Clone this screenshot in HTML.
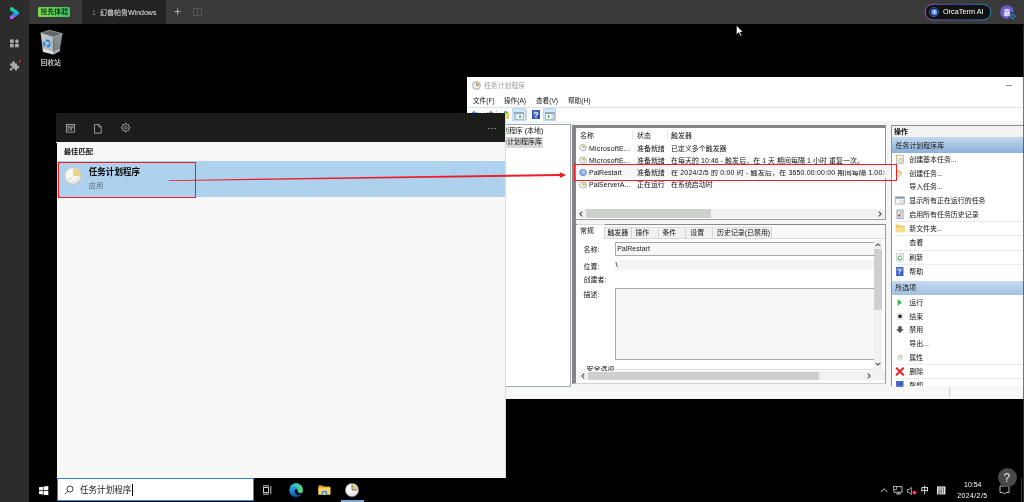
<!DOCTYPE html>
<html lang="zh-CN">
<head>
<meta charset="utf-8">
<title>OrcaTerm</title>
<style>
*{box-sizing:border-box;margin:0;padding:0}
html,body{width:1024px;height:502px;overflow:hidden;background:#000}
body{position:relative;font-family:"Liberation Sans","Noto Sans CJK SC",sans-serif;color:#000}
.a{position:absolute;white-space:nowrap}
.t{position:absolute;white-space:nowrap;line-height:1;font-size:6.95px;color:#111}
svg{position:absolute;overflow:visible}
/* ---------- OrcaTerm chrome ---------- */
#topbar{left:0;top:0;width:1024px;height:24.3px;background:#393939}
#side{left:0;top:0;width:29px;height:502px;background:#2c2c2c}
#tab1{left:82px;top:0;width:84px;height:24.3px;background:#232323}
#badge{left:38.2px;top:7px;width:32.3px;height:9.9px;background:linear-gradient(90deg,#82d948,#3cc56c);border-radius:1.5px;color:#103a12;font-size:6.9px;line-height:9.9px;text-align:center;font-weight:700}
/* ---------- search panel ---------- */
#sp{left:56.4px;top:112.5px;width:449.4px;height:365.8px;background:#f7f7f7;border-right:1px solid #d9dbdc}
#sphead{left:0;top:0;width:449px;height:29.4px;background:#1b1d1a}
#sprow{left:0;top:48.5px;width:449px;height:36px;background:#aed1ee}
/* ---------- task scheduler window ---------- */
#win{left:467px;top:76.8px;width:557px;height:321.9px;background:#f5f5f5}
#wtitle{left:0;top:0;width:557px;height:18px;background:#fff}
#wmenu{left:0;top:18px;width:557px;height:12px;background:#fff}
#wtool{left:0;top:30px;width:557px;height:14.2px;background:#fff;border-top:0.8px solid #e0e0e0}
.panel{background:#fff}
</style>
</head>
<body>
<div id="root" style="position:absolute;left:0;top:0;width:1024px;height:502px;will-change:transform">

<!-- ================= OrcaTerm top bar & sidebar ================= -->
<div class="a" id="topbar"></div>
<div class="a" id="tab1"></div>
<div class="a" id="side"></div>
<div class="a" id="badge">抢先体验</div>
<div class="t" style="left:92px;top:8.5px;color:#8a8a8a;font-size:7px">1</div>
<div class="t" style="left:100px;top:8.5px;color:#e8e8e8;font-size:7px">幻兽帕鲁Windows</div>
<!-- plus & split icons -->
<svg style="left:173.7px;top:8.3px" width="7.2" height="7.2" viewBox="0 0 8 8"><path d="M4 0.5V7.5M0.5 4H7.5" stroke="#c8c8c8" stroke-width="0.9" fill="none"/></svg>
<svg style="left:193px;top:8px" width="9" height="8" viewBox="0 0 9 8"><rect x="0.5" y="0.5" width="8" height="7" fill="none" stroke="#5e5e5e" stroke-width="0.8"/><path d="M4.5 0.5V7.5" stroke="#5e5e5e" stroke-width="0.8"/></svg>
<!-- logo -->
<svg style="left:9px;top:6px" width="11" height="14" viewBox="0 0 11 14">
  <defs><linearGradient id="lg1" x1="0" y1="0" x2="0" y2="1"><stop offset="0" stop-color="#1fd18a"/><stop offset="0.45" stop-color="#17b7d8"/><stop offset="0.75" stop-color="#3b7cf5"/><stop offset="1" stop-color="#c65cf0"/></linearGradient></defs>
  <path d="M2.6 2.9 L8.2 7 L2.6 11.3" fill="none" stroke="url(#lg1)" stroke-width="3.7" stroke-linecap="round" stroke-linejoin="round"/>
</svg>
<!-- sidebar icons -->
<svg style="left:10px;top:38.6px" width="9.2" height="8.8" viewBox="0 0 10 10" preserveAspectRatio="none"><g fill="#ababab"><rect x="0" y="0.5" width="4" height="4"/><rect x="0" y="5.5" width="4" height="4"/><rect x="5.5" y="5.5" width="4" height="4"/><path d="M7.5 0 L10 2.5 L7.5 5 L5 2.5Z"/></g></svg>
<svg style="left:9px;top:59.6px" width="12" height="12" viewBox="0 0 12 12"><path fill="#ababab" d="M1 3.5h2.2a1.5 1.5 0 1 1 2.6 0H8v2.2a1.5 1.5 0 1 1 0 2.6V10.5H5.8a1.4 1.4 0 1 0-2.6 0H1V8.2a1.4 1.4 0 1 0 0-2.5Z"/><circle cx="10.9" cy="1.5" r="1.15" fill="#ff1a1a"/></svg>
<!-- OrcaTerm AI pill -->
<svg style="left:924px;top:3px" width="68" height="18" viewBox="0 0 68 18">
  <defs><linearGradient id="lg2" x1="0" y1="0" x2="1" y2="0"><stop offset="0" stop-color="#c45adf"/><stop offset="0.5" stop-color="#3f62c8"/><stop offset="1" stop-color="#1fa4d4"/></linearGradient>
  <radialGradient id="rg1" cx="0.55" cy="0.45" r="0.6"><stop offset="0" stop-color="#f4b8e6"/><stop offset="0.5" stop-color="#7fa6f5"/><stop offset="1" stop-color="#2e6fe0"/></radialGradient></defs>
  <rect x="1.2" y="1.3" width="65.6" height="15.6" rx="7.8" fill="#121212" stroke="url(#lg2)" stroke-width="0.8"/>
  <circle cx="10" cy="9" r="4.6" fill="#0c1a33" stroke="#2a8fc4" stroke-width="0.6"/>
  <circle cx="10.2" cy="9.2" r="3.2" fill="url(#rg1)"/>
</svg>
<div class="t" style="left:943px;top:8.2px;color:#fff;font-size:7.3px">OrcaTerm AI</div>
<!-- avatar -->
<svg style="left:999px;top:4px" width="22" height="18" viewBox="0 0 22 18">
  <circle cx="8" cy="8" r="6.8" fill="#6a5ad0"/>
  <circle cx="13.7" cy="12.3" r="4.1" fill="#2f3a4f"/>
  <path d="M13.7 9.9 L16.1 12.3 L13.7 14.7 L11.3 12.3Z" fill="none" stroke="#27b6e8" stroke-width="1"/>
</svg>
<div class="t" style="left:1003.5px;top:8.5px;color:#fff;font-size:7px;font-weight:700">嘉</div>
<!-- cursor -->
<svg style="left:736px;top:25px" width="8" height="12" viewBox="0 0 8 12"><path d="M0.5 0.5V9.5L2.8 7.4L4.4 11L5.6 10.5L4.1 7H7Z" fill="#fff" stroke="#000" stroke-width="0.4"/></svg>

<!-- ================= remote desktop ================= -->
<!-- recycle bin -->
<svg style="left:30.6px;top:24px" width="40" height="36" viewBox="0 0 40 36">
  <defs>
   <linearGradient id="rbl" x1="0" y1="0" x2="1" y2="1"><stop offset="0" stop-color="#c9cdd0"/><stop offset="1" stop-color="#a9aeb2"/></linearGradient>
   <linearGradient id="rbr" x1="0" y1="0" x2="0" y2="1"><stop offset="0" stop-color="#8d9296"/><stop offset="1" stop-color="#7a7f83"/></linearGradient>
  </defs>
  <path d="M9.6 9.1 L22.5 12.9 L22.5 30.6 L12 27.7Z" fill="url(#rbl)"/>
  <path d="M22.5 12.9 L31.5 9.6 L28.7 27.2 L22.5 30.6Z" fill="url(#rbr)"/>
  <path d="M9.6 9.1 L18.2 6.2 L31.5 9.6 L22.5 12.9Z" fill="#63676b"/>
  <path d="M9.6 9.1 L18.2 6.2 L31.5 9.6 L22.5 12.9Z" fill="none" stroke="#d5d8da" stroke-width="0.5"/>
  <path d="M11.6 24.6 L22.5 27.4 L22.5 30.6 L12 27.7Z" fill="#e3e6e8" opacity="0.85"/>
  <path d="M22.5 27.4 L29.2 24.2 L28.7 27.2 L22.5 30.6Z" fill="#b4b9bd" opacity="0.8"/>
  <circle cx="15.9" cy="19.4" r="2.9" fill="none" stroke="#1787e8" stroke-width="2" stroke-dasharray="4.4 1.7"/>
</svg>
<div class="t" style="left:40.5px;top:60px;color:#fff;font-size:6.8px">回收站</div>

<!-- ================= Task Scheduler window ================= -->
<div class="a" id="win">
  <div class="a" id="wtitle"></div>
  <div class="a" id="wmenu"></div>
  <div class="a" id="wtool"></div>
  <!-- title -->
  <svg style="left:4.6px;top:3.9px" width="9" height="9" viewBox="0 0 8 8"><circle cx="4" cy="4" r="3.45" fill="#f1f5fa" stroke="#a3a3a3" stroke-width="0.85"/><path d="M4 4V0.9A3.1 3.1 0 0 1 7.1 4Z" fill="#ecc850"/><path d="M4 1.6V4H6" stroke="#555" stroke-width="0.55" fill="none"/></svg>
  <div class="t" style="left:17px;top:6.7px;color:#9a9a9a;font-size:6.85px">任务计划程序</div>
  <div class="a" style="left:539.2px;top:8.1px;width:6.2px;height:0.8px;background:#8a8a8a"></div>
  <!-- menu -->
  <div class="t" style="left:6px;top:21.7px;font-size:6.6px">文件(F)</div>
  <div class="t" style="left:37px;top:21.7px;font-size:6.6px">操作(A)</div>
  <div class="t" style="left:69px;top:21.7px;font-size:6.6px">查看(V)</div>
  <div class="t" style="left:101px;top:21.7px;font-size:6.6px">帮助(H)</div>
  <!-- toolbar -->
  <svg style="left:3px;top:32.6px" width="28" height="10" viewBox="0 0 28 10"><path d="M0.8 5L4.6 1.2V3.6H8.4V6.4H4.6V8.8Z" fill="#2a7de0"/><path d="M24.2 5L20.4 1.2V3.6H16.6V6.4H20.4V8.8Z" fill="#6f7a86"/></svg>
  <div class="a" style="left:28.8px;top:33.5px;width:0.8px;height:9.5px;background:#d6d6d6"></div>
  <div class="a" style="left:37.6px;top:35.4px;width:4.8px;height:7.2px;background:#f3d77c;border:0.5px solid #e3bf5e;border-radius:0.6px"></div>
  <div class="a" style="left:36.6px;top:34.2px;width:3.2px;height:3.2px;background:#3cb83a;border-radius:40%;transform:rotate(45deg)"></div>
  <div class="a" style="left:45px;top:31.7px;width:13.8px;height:12.3px;background:#cce8fc;border:0.5px solid #b6defa"></div>
  <svg style="left:47.2px;top:35.2px" width="9.8" height="7.6" viewBox="0 0 9.8 7.6"><rect x="0.35" y="0.35" width="9.1" height="6.9" fill="#fdfdfd" stroke="#8d97a3" stroke-width="0.7"/><rect x="0.7" y="0.7" width="8.4" height="1.3" fill="#8fa0b6"/><rect x="0.9" y="2.2" width="2.4" height="4.7" fill="#c3d6ee"/><rect x="5" y="3.2" width="2.1" height="2.6" rx="0.6" fill="#33c233"/></svg>
  <div class="a" style="left:59.2px;top:33.5px;width:0.8px;height:9.5px;background:#cfcfcf"></div>
  <div class="a" style="left:65px;top:33.1px;width:8px;height:9.4px;background:linear-gradient(135deg,#6a8ce6,#2c4fb8 70%);border:0.4px solid #3a58a8;color:#fff;font-size:8.6px;line-height:9px;text-align:center;font-weight:700">?</div>
  <div class="a" style="left:76px;top:31.7px;width:13.2px;height:12.3px;background:#cfe8fa;border:0.5px solid #b4dcf6"></div>
  <svg style="left:78.1px;top:35.2px" width="9.8" height="7.6" viewBox="0 0 9.8 7.6"><rect x="0.35" y="0.35" width="9.1" height="6.9" fill="#fdfdfd" stroke="#8d97a3" stroke-width="0.7"/><rect x="0.7" y="0.7" width="8.4" height="1.3" fill="#8fa0b6"/><rect x="6.5" y="2.2" width="2.4" height="4.7" fill="#c3d6ee"/><rect x="2.6" y="3.2" width="2.1" height="2.6" rx="0.6" fill="#33c233"/></svg>

  <!-- left tree -->
  <div class="a panel" style="left:0;top:47.4px;width:104.3px;height:262.8px;border:0.9px solid #a4acb5"></div>
  <div class="a" style="left:25px;top:60.5px;width:51px;height:10.5px;background:#d9d9d9"></div>
  <div class="t" style="left:14.15px;top:51px">任务计划程序 (本地)</div>
  <div class="t" style="left:26.3px;top:62.5px">任务计划程序库</div>

  <!-- center top -->
  <div class="a" style="left:105.2px;top:48.1px;width:313.5px;height:95px;background:#fff;border:3.9px solid #858585;border-left:4.3px solid #858585;border-right:0.8px solid #9a9a9a;border-bottom:1px solid #9a9a9a"></div>
  <div class="a" style="left:165.4px;top:53px;width:0.8px;height:10px;background:#e9e9e9"></div>
  <div class="a" style="left:199.5px;top:53px;width:0.8px;height:10px;background:#e9e9e9"></div>
  <div class="t" style="left:113px;top:56.7px">名称</div>
  <div class="t" style="left:170px;top:56.7px">状态</div>
  <div class="t" style="left:204px;top:56.7px">触发器</div>
  <!-- rows -->
  <div class="t" style="left:122px;top:68.3px;font-size:7px;letter-spacing:0.18px">MicrosoftE...</div>
  <div class="t" style="left:170px;top:68.8px">准备就绪</div>
  <div class="t" style="left:204px;top:68.8px">已定义多个触发器</div>
  <div class="t" style="left:122px;top:80.3px;font-size:7px;letter-spacing:0.18px">MicrosoftE...</div>
  <div class="t" style="left:170px;top:80.8px">准备就绪</div>
  <div class="t" style="left:204px;top:80.8px;letter-spacing:0.07px">在每天的 10:46 - 触发后，在 1 天 期间每隔 1 小时 重复一次。</div>
  <div class="a" style="left:110px;top:88.5px;width:309px;height:13px;background:#f7f7f7"></div>
  <div class="t" style="left:122px;top:92.3px;font-size:7px">PalRestart</div>
  <div class="t" style="left:170px;top:92.8px">准备就绪</div>
  <div class="t" style="left:204px;top:92.8px;width:214px;overflow:hidden;letter-spacing:0.2px">在 2024/2/5 的 0:00 时 - 触发后，在 3650.00:00:00 期间每隔 1.00:00:00 重复一次。</div>
  <div class="t" style="left:122px;top:104.3px;font-size:7px">PalServerA...</div>
  <div class="t" style="left:170px;top:104.8px">正在运行</div>
  <div class="t" style="left:204px;top:104.8px">在系统启动时</div>
  <!-- row icons -->
  <svg style="left:112.3px;top:67.1px" width="8.1" height="44.6" viewBox="0 0 7 43" preserveAspectRatio="none">
    <g fill="#f4f4f0" stroke="#8f8f8f" stroke-width="0.6"><circle cx="3.5" cy="3.5" r="3"/><circle cx="3.5" cy="15.5" r="3"/><circle cx="3.5" cy="39.5" r="3"/></g>
    <circle cx="3.5" cy="27.5" r="3" fill="#8fb8e8" stroke="#4a79b8" stroke-width="0.6"/>
    <g fill="#ecd58a"><path d="M3.5 3.5V0.8A2.7 2.7 0 0 1 6.2 3.5Z"/><path d="M3.5 15.5V12.8A2.7 2.7 0 0 1 6.2 15.5Z"/><path d="M3.5 39.5V36.8A2.7 2.7 0 0 1 6.2 39.5Z"/></g><g stroke="#777" stroke-width="0.5" fill="none"><path d="M3.5 1.6V3.5H5"/><path d="M3.5 13.6V15.5H5"/><path d="M3.5 37.6V39.5H5"/></g>
    <path d="M3.5 25.6V27.5H5" stroke="#fff" stroke-width="0.5" fill="none"/>
  </svg>
  <!-- h scroll -->
  <div class="a" style="left:109.6px;top:132.3px;width:308.4px;height:9px;background:#f1f1f1"></div>
  <div class="a" style="left:119px;top:132.6px;width:125px;height:8.4px;background:#cdd0cd"></div>
  <svg style="left:112px;top:133.8px" width="4" height="6" viewBox="0 0 4 6"><path d="M3.2 0.6L0.9 3L3.2 5.4" fill="none" stroke="#505050" stroke-width="1.1"/></svg>
  <svg style="left:410.5px;top:133.8px" width="4" height="6" viewBox="0 0 4 6"><path d="M0.8 0.6L3.1 3L0.8 5.4" fill="none" stroke="#505050" stroke-width="1.1"/></svg>

  <div class="a" style="left:105.2px;top:143px;width:4.3px;height:4px;background:#858585"></div>
  <!-- center bottom -->
  <div class="a" style="left:105.2px;top:146.9px;width:313.5px;height:160.4px;background:#fff;border:1.2px solid #8a8a8a;border-left:4.3px solid #858585;border-right:0.8px solid #9a9a9a;border-bottom:1px solid #cfcfcf"></div>
  <!-- tabs -->
  <div class="a" style="left:109.5px;top:148.1px;width:308.4px;height:13.6px;background:#f8f8f8"></div>
  <div class="a" style="left:137.6px;top:161.2px;width:280.4px;height:0.6px;background:#dcdcdc"></div>
  <div class="a" style="left:137.6px;top:149.8px;width:167.6px;height:12px;background:#f1f1f1;border-top:0.5px solid #dedede;border-bottom:0.6px solid #d9d9d9;border-right:0.6px solid #d6d6d6"></div>
  <div class="a" style="left:164.1px;top:150px;width:0.6px;height:11.5px;background:#d6d6d6"></div>
  <div class="a" style="left:191px;top:150px;width:0.6px;height:11.5px;background:#d6d6d6"></div>
  <div class="a" style="left:218.2px;top:150px;width:0.6px;height:11.5px;background:#d6d6d6"></div>
  <div class="a" style="left:244.5px;top:150px;width:0.6px;height:11.5px;background:#d6d6d6"></div>
  <div class="a" style="left:109.6px;top:147.4px;width:28.3px;height:14.6px;background:#fff;border:0.6px solid #d9d9d9;border-bottom:none;border-left:none"></div>
  <div class="t" style="left:113px;top:151.2px">常规</div>
  <div class="t" style="left:140.4px;top:152.8px">触发器</div>
  <div class="t" style="left:168.4px;top:152.8px">操作</div>
  <div class="t" style="left:195.4px;top:152.8px">条件</div>
  <div class="t" style="left:223.2px;top:152.8px">设置</div>
  <div class="t" style="left:250px;top:152.8px">历史记录(已禁用)</div>
  <!-- form -->
  <div class="t" style="left:116.6px;top:169.9px">名称:</div>
  <div class="a" style="left:148px;top:165.2px;width:262px;height:13.6px;background:#f7f7f7;border:0.6px solid #a8a8a8"></div>
  <div class="t" style="left:150.2px;top:168.6px;font-size:7px;color:#222">PalRestart</div>
  <div class="a" style="left:148px;top:182.8px;width:262px;height:10.2px;background:#f4f4f4"></div>
  <div class="t" style="left:116.6px;top:186.9px">位置:</div>
  <div class="t" style="left:148.6px;top:184.6px;font-size:8px">\</div>
  <div class="t" style="left:116.6px;top:200.4px">创建者:</div>
  <div class="t" style="left:116.6px;top:215.4px">描述:</div>
  <div class="a" style="left:148.4px;top:211.2px;width:262px;height:72px;background:#f6f6f6;border:0.6px solid #a8a8a8"></div>
  <div class="t" style="left:119.6px;top:289.3px;height:4.6px;overflow:hidden">安全选项</div>
  <div class="a" style="left:147.5px;top:291.8px;width:260px;height:0.6px;background:#dcdcdc"></div>
  <div class="a" style="left:113.5px;top:291.8px;width:5px;height:0.6px;background:#dcdcdc"></div>
  <!-- v scroll -->
  <div class="a" style="left:406.9px;top:163px;width:8.6px;height:131.6px;background:#f1f1f1"></div>
  <div class="a" style="left:407.2px;top:172.7px;width:8px;height:60.7px;background:#cdd0cd"></div>
  <svg style="left:408.2px;top:166px" width="6" height="4" viewBox="0 0 6 4"><path d="M0.6 3.2L3 0.9L5.4 3.2" fill="none" stroke="#505050" stroke-width="1.1"/></svg>
  <svg style="left:408.2px;top:285.6px" width="6" height="4" viewBox="0 0 6 4"><path d="M0.6 0.8L3 3.1L5.4 0.8" fill="none" stroke="#505050" stroke-width="1.1"/></svg>
  <!-- h scroll 2 -->
  <div class="a" style="left:109.6px;top:294.6px;width:308.4px;height:8.6px;background:#f1f1f1"></div>
  <div class="a" style="left:120.9px;top:294.9px;width:231.6px;height:8px;background:#cdd0cd"></div>
  <svg style="left:113.6px;top:296px" width="4" height="6" viewBox="0 0 4 6"><path d="M3.2 0.6L0.9 3L3.2 5.4" fill="none" stroke="#505050" stroke-width="1.1"/></svg>
  <svg style="left:400px;top:296px" width="4" height="6" viewBox="0 0 4 6"><path d="M0.8 0.6L3.1 3L0.8 5.4" fill="none" stroke="#505050" stroke-width="1.1"/></svg>

  <!-- right: actions -->
  <div class="a" style="left:423.6px;top:48px;width:134px;height:260.8px;background:#fff;border-left:1px solid #8e9298;border-top:1.2px solid #8e8e8e"></div>
  <div class="a" style="left:424.6px;top:49px;width:133px;height:12px;background:#f3f3f3"></div>
  <div class="t" style="left:427px;top:52px;font-weight:700">操作</div>
  <div class="a" style="left:424.6px;top:60.7px;width:133px;height:15.2px;background:linear-gradient(#c3d8ee,#8db1da)"></div>
  <div class="t" style="left:428.5px;top:66.2px">任务计划程序库</div>
  <div class="t" style="left:442.2px;top:80.1px">创建基本任务...</div>
  <div class="t" style="left:442.2px;top:93.9px">创建任务...</div>
  <div class="t" style="left:442.2px;top:107.5px">导入任务...</div>
  <div class="t" style="left:442.2px;top:121.4px">显示所有正在运行的任务</div>
  <div class="t" style="left:442.2px;top:134.9px">启用所有任务历史记录</div>
  <div class="t" style="left:442.2px;top:149.2px">新文件夹...</div>
  <div class="t" style="left:442.2px;top:163.6px">查看</div>
  <div class="t" style="left:442.2px;top:177.9px">刷新</div>
  <div class="t" style="left:442.2px;top:192.2px">帮助</div>
  <div class="t" style="left:442.2px;top:223.2px">运行</div>
  <div class="t" style="left:442.2px;top:237px">结束</div>
  <div class="t" style="left:442.2px;top:250.6px">禁用</div>
  <div class="t" style="left:442.2px;top:264.4px">导出...</div>
  <div class="t" style="left:442.2px;top:278px">属性</div>
  <div class="t" style="left:442.2px;top:292.2px">删除</div>
  <div class="a" style="left:424.6px;top:203.9px;width:133px;height:14.4px;background:linear-gradient(#c6daef,#a3c1e2)"></div>
  <div class="t" style="left:428.3px;top:208.6px">所选项</div>
  <div class="t" style="left:442.2px;top:305.3px;height:4.2px;overflow:hidden">帮助</div>
  <div class="a" style="left:427px;top:143.9px;width:130px;height:0.6px;background:#ececec"></div>
  <div class="a" style="left:427px;top:158.2px;width:130px;height:0.6px;background:#ececec"></div>
  <div class="a" style="left:427px;top:173.0px;width:130px;height:0.6px;background:#ececec"></div>
  <div class="a" style="left:427px;top:187.3px;width:130px;height:0.6px;background:#ececec"></div>
  <div class="a" style="left:427px;top:287.5px;width:130px;height:0.6px;background:#ececec"></div>
  <div class="a" style="left:427px;top:301.7px;width:130px;height:0.6px;background:#ececec"></div>
  <svg style="left:423.6px;top:48.7px" width="20" height="261" viewBox="890 125 20 261"><rect x="895.6" y="155.2" width="6.6" height="8" fill="#fff" stroke="#8d8d8d" stroke-width="0.6"/><circle cx="899.6" cy="160.0" r="2.3" fill="#f6f1dc" stroke="#a89858" stroke-width="0.5"/><path d="M899.6 158.5v1.5h1.2" stroke="#666" stroke-width="0.4" fill="none"/><circle cx="895.6" cy="155.6" r="1.1" fill="#f3c230"/><circle cx="897.6" cy="173.5" r="2.8" fill="#f6f1dc" stroke="#a89858" stroke-width="0.5"/><path d="M897.6 173.5V170.9A2.6 2.6 0 0 1 900.2 173.5Z" fill="#f0c23a"/><circle cx="896" cy="170.6" r="1.1" fill="#f3c230"/><rect x="894.6" y="196.9" width="8.8" height="7.2" fill="#f4f7fa" stroke="#8a97a3" stroke-width="0.6"/><rect x="894.6" y="196.9" width="8.8" height="1.7" fill="#7e95ab"/><circle cx="901" cy="202.1" r="1.8" fill="#f6f1dc" stroke="#9a9a8a" stroke-width="0.4"/><rect x="896" y="210.1" width="6" height="8.2" fill="#e6eefb" stroke="#5679bd" stroke-width="0.7"/><circle cx="899.6" cy="212.8" r="1.1" fill="#f2b51d"/><circle cx="898.4" cy="215.5" r="1.2" fill="#e23a2e"/><path d="M895 224.9h3l0.9 1h4.5v6h-8.4z" fill="#f3cf6b" stroke="#d9ab3a" stroke-width="0.4"/><path d="M895 227.3h8.4v4.6h-8.4z" fill="#f8de8c"/><rect x="895.8" y="253.3" width="6.6" height="7.8" fill="#fff" stroke="#a9b5ad" stroke-width="0.6"/><path d="M900.9 257.8a2 2 0 1 1-1.2-1.6" fill="none" stroke="#35a94c" stroke-width="1"/><path d="M899.5 256.5l1.8 0.2l-0.4-1.8z" fill="#35a94c"/><rect x="895.5" y="267.2" width="6.6" height="8.6" fill="#3a63cf" stroke="#21439c" stroke-width="0.5"/><rect x="895.8" y="267.5" width="6" height="3" fill="#6f93e6" opacity="0.6"/><path d="M896.6 299.3v6.4l4.6-3.2z" fill="#3db64c"/><rect x="896" y="313.3" width="6" height="6" fill="#f1f1f1" stroke="#d0d0d0" stroke-width="0.4"/><rect x="897.4" y="314.7" width="3.2" height="3.2" fill="#222"/><path d="M897.2 326.3h3.4v3h2.2l-3.9 3.8l-3.9-3.8h2.2z" fill="#505050"/><circle cx="899" cy="357.5" r="2.7" fill="#f6f6f0" stroke="#a8a8a8" stroke-width="0.5"/><path d="M899 357.5V355.0A2.5 2.5 0 0 1 901.5 357.5Z" fill="#ecd58a"/><path d="M899 355.7v1.8h1.3" stroke="#5577aa" stroke-width="0.4" fill="none"/><path d="M895.6 368.3l6.6 6.4M902.2 368.3l-6.6 6.4" stroke="#e3242b" stroke-width="2" stroke-linecap="round"/><rect x="895.5" y="381.4" width="6.6" height="5" fill="#3a63cf" stroke="#21439c" stroke-width="0.5"/></svg>
  <div class="t" style="left:430.2px;top:191.6px;color:#fff;font-size:7.4px;font-weight:700">?</div>

  <!-- status bar -->
  <div class="a" style="left:0;top:310.1px;width:557px;height:11.8px;background:#f7f7f7"></div>
  <div class="a" style="left:481.6px;top:310px;width:0.7px;height:10px;background:#d4d4d4"></div>
</div>

<!-- ================= Windows search panel ================= -->
<div class="a" id="sp">
  <div class="a" id="sphead"></div>
  <svg style="left:9.6px;top:11.4px" width="9.2" height="8.6" viewBox="0 0 10 9" preserveAspectRatio="none"><rect x="0.5" y="0.5" width="9" height="8" fill="none" stroke="#c6c6c6" stroke-width="0.75"/><path d="M0.5 2.3H9.5M2.2 3.6V7.2M2.2 3.8H4.6V7M6.2 3.8V7M5.2 3.8H8" stroke="#c6c6c6" stroke-width="0.7" fill="none"/></svg>
  <svg style="left:37.3px;top:11.2px" width="7.8" height="9.6" viewBox="0 0 8 10"><path d="M0.5 0.5H5L7.5 3V9.5H0.5Z M5 0.5V3H7.5" fill="none" stroke="#c6c6c6" stroke-width="0.75"/></svg>
  <svg style="left:64.7px;top:10.9px" width="9.4" height="9.4" viewBox="0 0 10 10"><path d="M8.31 4.21 L9.46 4.44 L9.46 5.56 L8.31 5.79 L7.90 6.78 L8.56 7.76 L7.76 8.56 L6.78 7.90 L5.79 8.31 L5.56 9.46 L4.44 9.46 L4.21 8.31 L3.22 7.90 L2.24 8.56 L1.44 7.76 L2.10 6.78 L1.69 5.79 L0.54 5.56 L0.54 4.44 L1.69 4.21 L2.10 3.22 L1.44 2.24 L2.24 1.44 L3.22 2.10 L4.21 1.69 L4.44 0.54 L5.56 0.54 L5.79 1.69 L6.78 2.10 L7.76 1.44 L8.56 2.24 L7.90 3.22Z" fill="none" stroke="#c6c6c6" stroke-width="0.75" stroke-linejoin="round"/><circle cx="5" cy="5" r="1.35" fill="none" stroke="#c6c6c6" stroke-width="0.7"/></svg>
  <div class="t" style="left:431px;top:11.9px;color:#d8d8d8;font-size:9px;letter-spacing:0.2px">···</div>
  <div class="t" style="left:7.3px;top:35.5px;font-weight:700;font-size:7.4px;color:#111">最佳匹配</div>
  <div class="a" id="sprow"></div>
  <div class="a" style="left:0;top:30px;width:0.6px;height:336.3px;background:#000"></div>
  <!-- app icon -->
  <svg style="left:7.5px;top:54.9px" width="18.1" height="18.1" viewBox="0 0 18 18">
    <defs><radialGradient id="ck" cx="0.4" cy="0.35" r="0.75"><stop offset="0" stop-color="#ffffff"/><stop offset="0.7" stop-color="#ecece6"/><stop offset="1" stop-color="#c9c9c2"/></radialGradient></defs>
    <circle cx="9" cy="9" r="8.4" fill="url(#ck)" stroke="#b9b9b2" stroke-width="0.6"/>
    <path d="M9 9V1.2A7.8 7.8 0 0 1 16.8 9Z" fill="#ecd58a"/>
    <path d="M9 9 L3.5 14" stroke="#d0d0cc" stroke-width="0.8"/>
  </svg>
  <div class="t" style="left:32.4px;top:55.7px;font-weight:700;font-size:8.55px;color:#000">任务计划程序</div>
  <div class="t" style="left:32.4px;top:69.5px;font-size:7.3px;color:#5a6a78">应用</div>
</div>

<!-- ================= red annotations ================= -->
<div class="a" style="left:58.4px;top:162px;width:137.6px;height:35.6px;border:1.4px solid #ee1c25"></div>
<div class="a" style="left:574px;top:163.7px;width:323.2px;height:16.9px;border:1.6px solid #ee1c25"></div>
<svg style="left:0;top:0" width="1024" height="502" viewBox="0 0 1024 502"><path d="M168.8 180.2 L560.5 174.0 L560.5 176.1 L168.8 181.0Z" fill="#ee1c25"/><path d="M559.8 172.2 L566.2 175 L559.8 177.9Z" fill="#ee1c25"/></svg>

<!-- ================= Windows taskbar ================= -->
<div class="a" style="left:29px;top:478.2px;width:995px;height:23.8px;background:#000"></div>
<svg style="left:38.6px;top:485.5px" width="9.3" height="9.3" viewBox="0 0 9 9"><g fill="#fff"><path d="M0 1.2L3.8 0.7V4.2H0Z"/><path d="M4.4 0.6L9 0V4.2H4.4Z"/><path d="M0 4.8H3.8V8.3L0 7.8Z"/><path d="M4.4 4.8H9V9L4.4 8.4Z"/></g></svg>
<div class="a" style="left:56.7px;top:478.3px;width:196.9px;height:22.8px;background:#fff;border:1.4px solid #2b85d8"></div>
<svg style="left:63.6px;top:485px" width="10" height="10" viewBox="0 0 10 10"><circle cx="6" cy="4" r="3" fill="none" stroke="#333" stroke-width="0.9"/><path d="M3.8 6.2L0.8 9.2" stroke="#333" stroke-width="0.9"/></svg>
<div class="t" style="left:80px;top:485.6px;font-size:8.55px;color:#111">任务计划程序</div>
<div class="a" style="left:131.8px;top:484.2px;width:0.8px;height:11.4px;background:#000"></div>
<!-- task view -->
<svg style="left:262px;top:485px" width="10" height="10" viewBox="0 0 10 10"><rect x="1.5" y="2.5" width="5" height="5" fill="none" stroke="#e0e0e0" stroke-width="0.9"/><path d="M1 0.8H7M1 9.2H7M8.8 1V9" stroke="#e0e0e0" stroke-width="0.9"/></svg>
<!-- edge -->
<svg style="left:289.1px;top:482.7px" width="14.3" height="14.3" viewBox="0 0 14 14">
  <defs><linearGradient id="eg" x1="0.2" y1="0" x2="0.6" y2="1"><stop offset="0" stop-color="#35b8f0"/><stop offset="0.55" stop-color="#1a7fd4"/><stop offset="1" stop-color="#0b4f9e"/></linearGradient>
  <linearGradient id="eg2" x1="0" y1="0" x2="1" y2="1"><stop offset="0" stop-color="#2fc0c8"/><stop offset="1" stop-color="#63d968"/></linearGradient></defs>
  <circle cx="7" cy="7" r="6.7" fill="url(#eg)"/>
  <path d="M5.5 0.5A6.7 6.7 0 0 1 13.7 7C13.7 9 12.2 9.8 10.8 9.8 9.2 9.8 8.4 9 8.6 8.2 9.4 6.4 8.2 4.2 5.8 3.6 4 3.2 2.4 3.8 1.4 4.6 2.2 2.6 3.6 1 5.5 0.5Z" fill="url(#eg2)"/>
  <path d="M6.3 6.2C7.6 6 8.7 6.9 8.6 8.2 8.4 9 9.2 9.8 10.8 9.8 11.6 9.8 12.3 9.6 12.8 9.2 12 11.4 9.6 12.4 7.8 11.6 5.6 10.6 5 8 6.3 6.2Z" fill="#04101c"/>
</svg>
<!-- explorer -->
<svg style="left:318px;top:484.2px" width="12.8" height="11.2" viewBox="0 0 14 12">
  <path d="M0.5 1.5h4.5l1 1.2h7.5v8.8h-13z" fill="#e9a825"/>
  <path d="M0.5 4h13v7.5h-13z" fill="#fbd35f"/>
  <rect x="4" y="7.5" width="6" height="4" fill="#3b8edb"/><rect x="5.5" y="9" width="3" height="2.5" fill="#fbd35f"/>
</svg>
<!-- task scheduler -->
<svg style="left:345.3px;top:483.1px" width="14" height="14" viewBox="0 0 14 14">
  <defs><radialGradient id="ck2" cx="0.4" cy="0.4" r="0.7"><stop offset="0" stop-color="#ffffff"/><stop offset="0.7" stop-color="#e9eaec"/><stop offset="1" stop-color="#b9bcc2"/></radialGradient></defs>
  <circle cx="7" cy="7" r="6.6" fill="url(#ck2)" stroke="#a9acb2" stroke-width="0.5"/>
  <path d="M7 7V1.2A5.8 5.8 0 0 1 12.8 7Z" fill="#edcb6a"/>
  <path d="M7 1.6V7H12" stroke="#56678a" stroke-width="0.9" fill="none"/>
</svg>
<div class="a" style="left:341px;top:500.1px;width:23px;height:1.9px;background:#76a9dc"></div>
<!-- tray -->
<svg style="left:880px;top:485px" width="64" height="12" viewBox="0 0 64 12">
  <path d="M1 6.9L4.2 3.7L7.4 6.9" fill="none" stroke="#e6e6e6" stroke-width="0.9"/>
  <g transform="translate(1,-0.3)"><rect x="13" y="2" width="8" height="5.5" fill="none" stroke="#e6e6e6" stroke-width="0.8"/><path d="M15 9.3H20M17.5 7.5V9.3" stroke="#e6e6e6" stroke-width="0.8"/><rect x="12.5" y="1.6" width="3.2" height="3.2" fill="#000" stroke="#e6e6e6" stroke-width="0.6"/></g>
  <g transform="translate(0.9,0)"><path d="M26.5 4.6h1.6l2.3-2.2v7.2l-2.3-2.2h-1.6z" fill="none" stroke="#e6e6e6" stroke-width="0.7"/>
  <circle cx="33.6" cy="7.6" r="2.1" fill="#e81123"/><path d="M32.7 6.7l1.8 1.8M34.5 6.7l-1.8 1.8" stroke="#fff" stroke-width="0.5"/></g>
  <rect x="57" y="1.4" width="8.4" height="8" fill="#ececec"/><path d="M59.1 2.2V6.2M61.2 2.2V8.6M63.3 2.2V8.6M58 6.8H60.6M58 8.3H60.2" stroke="#111" stroke-width="0.7" fill="none"/>
</svg>
<div class="t" style="left:920.7px;top:487.2px;color:#fff;font-size:8px;font-weight:500">中</div>
<div class="t" style="left:964px;top:481.4px;color:#fff;font-size:7px">10:54</div>
<div class="t" style="left:957.2px;top:491.9px;color:#fff;font-size:7px;letter-spacing:0.38px">2024/2/5</div>
<svg style="left:999px;top:485px" width="12" height="12" viewBox="0 0 12 12"><path d="M1 1h9v6.5H7L5.5 9.2 4 7.5H1z" fill="none" stroke="#e6e6e6" stroke-width="0.8"/></svg>
<div class="a" style="left:1021px;top:478px;width:0.8px;height:24px;background:#3a3a3a"></div>
<div class="a" style="left:1023px;top:24.5px;width:1px;height:478px;background:rgba(60,60,60,0.7)"></div>
<!-- help bubble -->
<div class="a" style="left:998px;top:468px;width:19px;height:19px;border-radius:50%;background:#4c4c4c;opacity:0.96"></div>
<div class="t" style="left:1003.5px;top:471.5px;color:#e8e8e8;font-size:12px">?</div>

</div>
</body>
</html>
